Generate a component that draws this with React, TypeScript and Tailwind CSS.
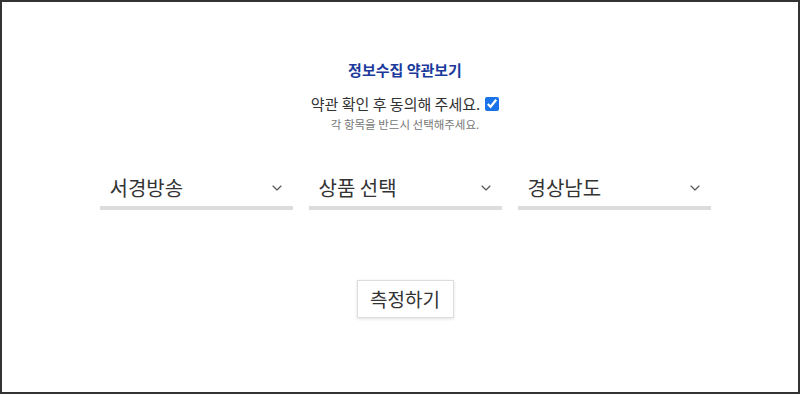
import { ChevronDown } from "lucide-react";

const regions = ["서경방송", "상품 선택", "경상남도"];

function SelectBox({ label }: { label: string }) {
  return (
    <div className="w-[193px]">
      <div className="flex h-[36px] items-center justify-between pl-[10px] pr-[8px] text-[20px] text-[#333]">
        <span>{label}</span>
        <ChevronDown className="h-4 w-4 text-[#555]" strokeWidth={1.75} />
      </div>
      <div className="h-[4px] bg-[#dcdcdc]" />
    </div>
  );
}

export default function App() {
  return (
    <div
      className="box-border h-[394px] w-[800px] border-2 border-[#333] bg-white"
      style={{ fontFamily: '"Noto Sans CJK KR", "Noto Sans", sans-serif' }}
    >
      <div className="flex flex-col items-center pl-[10px] pt-[57px]">
        <h1 className="text-[15px] font-bold leading-[22px] text-[#1b3a9c]">정보수집 약관보기</h1>
        <label className="mt-[11px] flex items-center gap-[5px] text-[15px] leading-[24px] text-[#333]">
          약관 확인 후 동의해 주세요.
          <input type="checkbox" defaultChecked className="h-[14px] w-[14px] accent-[#1a73e8]" />
        </label>
        <p className="text-[11.5px] leading-[16px] text-[#777]">각 항목을 반드시 선택해주세요.</p>

        <div className="mt-[38px] flex gap-[16px]">
          {regions.map((r) => (
            <SelectBox key={r} label={r} />
          ))}
        </div>

        <button className="mt-[70px] h-[38px] w-[97px] border border-[#ddd] bg-white text-[19px] text-[#333] shadow-[0_1px_3px_rgba(0,0,0,0.12)]">
          측정하기
        </button>
      </div>
    </div>
  );
}
